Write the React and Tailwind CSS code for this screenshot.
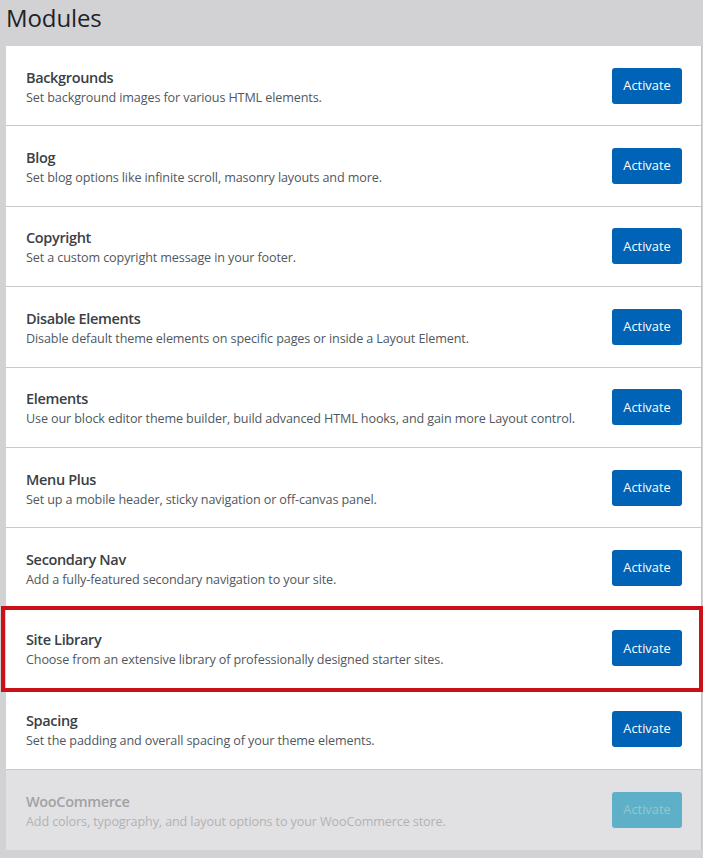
import React from "react";

const rows = [
  ["Backgrounds", "Set background images for various HTML elements."],
  ["Blog", "Set blog options like infinite scroll, masonry layouts and more."],
  ["Copyright", "Set a custom copyright message in your footer."],
  ["Disable Elements", "Disable default theme elements on specific pages or inside a Layout Element."],
  ["Elements", "Use our block editor theme builder, build advanced HTML hooks, and gain more Layout control."],
  ["Menu Plus", "Set up a mobile header, sticky navigation or off-canvas panel."],
  ["Secondary Nav", "Add a fully-featured secondary navigation to your site."],
  ["Site Library", "Choose from an extensive library of professionally designed starter sites."],
  ["Spacing", "Set the padding and overall spacing of your theme elements."],
];

export default function App() {
  return (
    <div className="w-[703px] h-[858px] bg-[#d2d2d4] overflow-hidden relative" style={{ fontFamily: '"Open Sans", "Noto Sans", sans-serif' }}>
      <div className="h-[46px] pl-[6px] pt-[1px] text-[24px] leading-[33px] text-[#1d2327] tracking-[-0.1px]">Modules</div>
      <div className="ml-[6px] mr-[1px] border-r border-[#c3c4c7] bg-white">
        {rows.map(([t, d]) => (
          <div key={t} className="h-[80.4px] border-b border-[#c9c9cb] flex items-center justify-between pl-[20px] pr-[19px]">
            <div className="flex flex-col pt-[2px]">
              <div className="text-[14.5px] leading-[21px] font-semibold text-[#3a4045] tracking-[-0.35px]">{t}</div>
              <div className="text-[12.6px] leading-[19px] text-[#50575e] tracking-[-0.12px]">{d}</div>
            </div>
            <button className="w-[70px] h-[36px] rounded-[3px] bg-[#0163b5] text-white text-[12.8px]">Activate</button>
          </div>
        ))}
        <div className="h-[80px] bg-[#e1e1e3] flex items-center justify-between pl-[20px] pr-[19px]">
          <div className="flex flex-col pt-[2px]">
            <div className="text-[14.5px] leading-[21px] font-semibold text-[#a2a2a4] tracking-[-0.35px]">WooCommerce</div>
            <div className="text-[12.6px] leading-[19px] text-[#b2b2b4] tracking-[-0.12px]">Add colors, typography, and layout options to your WooCommerce store.</div>
          </div>
          <button className="w-[70px] h-[36px] rounded-[3px] bg-[#5eb0c8] text-[#93c7cf] text-[12.8px]">Activate</button>
        </div>
      </div>
      <div className="absolute left-[1px] top-[606px] w-[702px] h-[86px] border-4 border-[#cc1018] pointer-events-none" />
    </div>
  );
}
